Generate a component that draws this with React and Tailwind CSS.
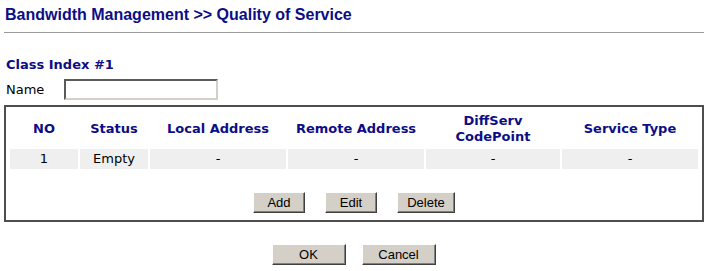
import React from 'react';

const navy = 'text-[#0d0d86]';

const columns = ['NO', 'Status', 'Local Address', 'Remote Address', 'DiffServ CodePoint', 'Service Type'];
const row = ['1', 'Empty', '-', '-', '-', '-'];

function WinButton({ children, className = '' }) {
  return (
    <button
      type="button"
      className={`h-[21px] bg-[#d4d0c8] border border-t-white border-l-white border-r-[#404040] border-b-[#404040] shadow-[inset_-1px_-1px_0_#808080] text-[13px] leading-none text-black font-['Liberation_Sans',Arial,sans-serif] ${className}`}
    >
      {children}
    </button>
  );
}

export default function App() {
  return (
    <div className="w-[708px] h-[271px] bg-white font-['DejaVu_Sans',Verdana,sans-serif] text-black">
      <h1 className={`pl-[5px] pt-[5px] h-[26px] text-[16px] leading-[20px] font-bold ${navy} font-['Liberation_Sans',Arial,sans-serif]`}>
        Bandwidth Management &gt;&gt; Quality of Service
      </h1>
      <div className="mx-[4px] mt-[6px] border-t border-[#999999]" />

      <div className={`pl-[6px] mt-[24px] h-[16px] text-[13px] leading-[16px] font-bold ${navy}`}>Class Index #1</div>

      <div className="flex items-center mt-[6px] h-[21px]">
        <span className="pl-[6px] w-[64px] text-[13px] leading-[16px]">Name</span>
        <input
          type="text"
          className="w-[154px] h-[21px] bg-white border-2 border-t-[#5a5a5a] border-l-[#5a5a5a] border-b-[#d4d0c8] border-r-[#d4d0c8] outline-none"
        />
      </div>

      <div className="mx-[4px] mt-[5px] w-[700px] h-[117px] border-2 border-[#4e4e4e] px-[4px]">
        <div className="grid grid-cols-[68px_68px_136px_136px_134px_136px] gap-x-[2px]">
          {columns.map((c) => (
            <div
              key={c}
              className={`h-[40px] pt-[4px] flex items-center justify-center text-center text-[13px] leading-[16px] font-bold ${navy} ${c === 'DiffServ CodePoint' ? 'px-[28px]' : ''}`}
            >
              {c}
            </div>
          ))}
          {row.map((v, i) => (
            <div key={i} className="mt-[2px] h-[20px] flex items-center justify-center bg-[#efefef] text-[13px] leading-[16px]">
              {v}
            </div>
          ))}
        </div>
        <div className="flex justify-center gap-[20px] mt-[23px]">
          <WinButton className="w-[52px]">Add</WinButton>
          <WinButton className="w-[52px]">Edit</WinButton>
          <WinButton className="w-[58px]">Delete</WinButton>
        </div>
      </div>

      <div className="flex justify-center gap-[16px] mt-[22px] pr-[1px]">
        <WinButton className="w-[74px]">OK</WinButton>
        <WinButton className="w-[74px]">Cancel</WinButton>
      </div>
    </div>
  );
}
